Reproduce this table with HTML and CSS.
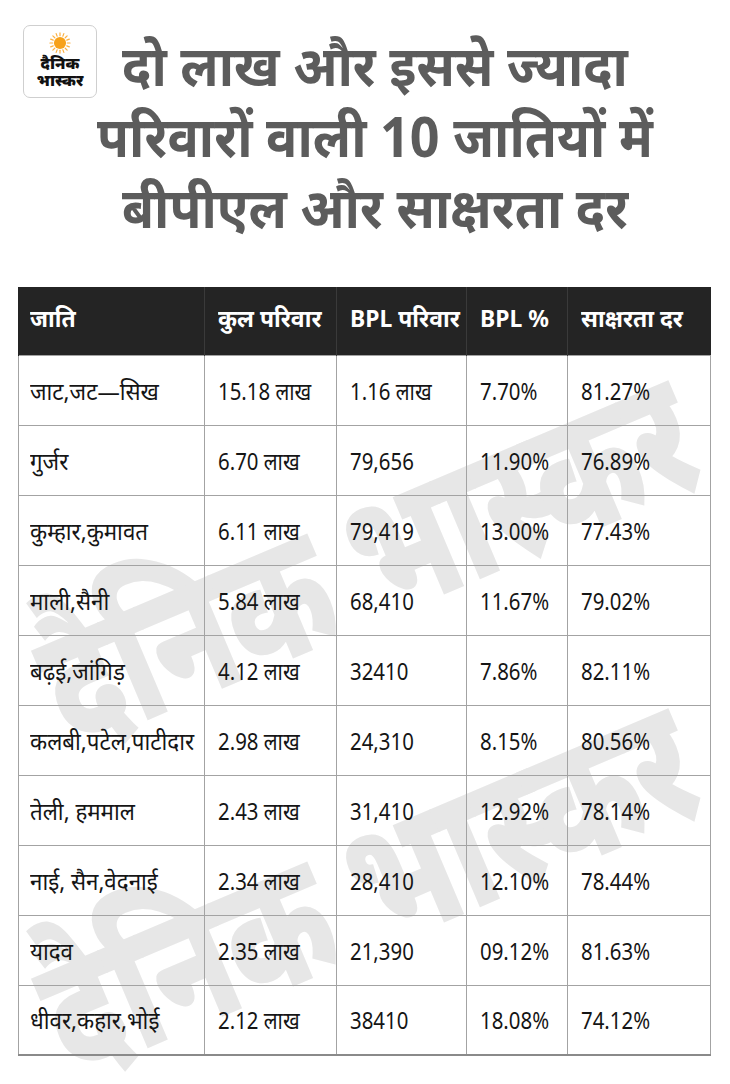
FILE: index.html
```html
<!DOCTYPE html>
<html lang="hi">
<head>
<meta charset="utf-8">
<title>बीपीएल और साक्षरता दर</title>
<link rel="stylesheet" href="styles.css">
</head>
<body>
<div class="page">
  <div class="watermark wm-one">दैनिक भास्कर</div>
  <div class="watermark wm-two">दैनिक भास्कर</div>

  <header class="head">
    <div class="logo">
      <svg class="sun" viewBox="0 0 24 24" width="22" height="22" aria-hidden="true">
        <g stroke="#fbb040" stroke-width="1.3" stroke-linecap="round">
          <line x1="12" y1="1" x2="12" y2="4"/>
          <line x1="12" y1="20" x2="12" y2="23"/>
          <line x1="1" y1="12" x2="4" y2="12"/>
          <line x1="20" y1="12" x2="23" y2="12"/>
          <line x1="4.2" y1="4.2" x2="6.3" y2="6.3"/>
          <line x1="17.7" y1="17.7" x2="19.8" y2="19.8"/>
          <line x1="4.2" y1="19.8" x2="6.3" y2="17.7"/>
          <line x1="17.7" y1="6.3" x2="19.8" y2="4.2"/>
          <line x1="7.8" y1="1.8" x2="8.9" y2="4.6"/>
          <line x1="16.2" y1="1.8" x2="15.1" y2="4.6"/>
          <line x1="7.8" y1="22.2" x2="8.9" y2="19.4"/>
          <line x1="16.2" y1="22.2" x2="15.1" y2="19.4"/>
          <line x1="1.8" y1="7.8" x2="4.6" y2="8.9"/>
          <line x1="1.8" y1="16.2" x2="4.6" y2="15.1"/>
          <line x1="22.2" y1="7.8" x2="19.4" y2="8.9"/>
          <line x1="22.2" y1="16.2" x2="19.4" y2="15.1"/>
        </g>
        <circle cx="12" cy="12" r="6.6" fill="#f7a11a"/>
      </svg>
      <div class="logo-text">दैनिक<br>भास्कर</div>
    </div>
    <h1 class="title">दो लाख और इससे ज्यादा<br>परिवारों वाली 10 जातियों में<br>बीपीएल और साक्षरता दर</h1>
  </header>

  <table class="data">
    <colgroup>
      <col class="c1"><col class="c2"><col class="c3"><col class="c4"><col class="c5">
    </colgroup>
    <thead>
      <tr><th><span class="t">जाति</span></th><th><span class="t">कुल परिवार</span></th><th><span class="t">BPL परिवार</span></th><th><span class="t">BPL %</span></th><th><span class="t">साक्षरता दर</span></th></tr>
    </thead>
    <tbody>
      <tr><td><span class="t">जाट,जट—सिख</span></td><td><span class="t">15.18 लाख</span></td><td><span class="t">1.16 लाख</span></td><td><span class="t">7.70%</span></td><td><span class="t">81.27%</span></td></tr>
      <tr><td><span class="t">गुर्जर</span></td><td><span class="t">6.70 लाख</span></td><td><span class="t">79,656</span></td><td><span class="t">11.90%</span></td><td><span class="t">76.89%</span></td></tr>
      <tr><td><span class="t">कुम्हार,कुमावत</span></td><td><span class="t">6.11 लाख</span></td><td><span class="t">79,419</span></td><td><span class="t">13.00%</span></td><td><span class="t">77.43%</span></td></tr>
      <tr><td><span class="t">माली,सैनी</span></td><td><span class="t">5.84 लाख</span></td><td><span class="t">68,410</span></td><td><span class="t">11.67%</span></td><td><span class="t">79.02%</span></td></tr>
      <tr><td><span class="t">बढ़ई,जांगिड़</span></td><td><span class="t">4.12 लाख</span></td><td><span class="t">32410</span></td><td><span class="t">7.86%</span></td><td><span class="t">82.11%</span></td></tr>
      <tr><td><span class="t">कलबी,पटेल,पाटीदार</span></td><td><span class="t">2.98 लाख</span></td><td><span class="t">24,310</span></td><td><span class="t">8.15%</span></td><td><span class="t">80.56%</span></td></tr>
      <tr><td><span class="t">तेली, हममाल</span></td><td><span class="t">2.43 लाख</span></td><td><span class="t">31,410</span></td><td><span class="t">12.92%</span></td><td><span class="t">78.14%</span></td></tr>
      <tr><td><span class="t">नाई, सैन,वेदनाई</span></td><td><span class="t">2.34 लाख</span></td><td><span class="t">28,410</span></td><td><span class="t">12.10%</span></td><td><span class="t">78.44%</span></td></tr>
      <tr><td><span class="t">यादव</span></td><td><span class="t">2.35 लाख</span></td><td><span class="t">21,390</span></td><td><span class="t">09.12%</span></td><td><span class="t">81.63%</span></td></tr>
      <tr><td><span class="t">धीवर,कहार,भोई</span></td><td><span class="t">2.12 लाख</span></td><td><span class="t">38410</span></td><td><span class="t">18.08%</span></td><td><span class="t">74.12%</span></td></tr>
    </tbody>
  </table>
</div>
</body>
</html>
```

FILE: styles.css
```css
html, body {
  margin: 0;
  padding: 0;
  background: #ffffff;
}

.page {
  position: relative;
  width: 730px;
  height: 1084px;
  overflow: hidden;
  background: #ffffff;
  font-family: "Noto Sans", "Noto Sans Devanagari", "Lohit Devanagari", sans-serif;
}

.head {
  display: grid;
  grid-template-columns: 1fr;
  align-items: start;
  height: 287px;
  padding-top: 25px;
  box-sizing: border-box;
}

.logo {
  grid-area: 1 / 1;
  justify-self: start;
  margin-left: 23px;
  width: 74px;
  height: 73px;
  box-sizing: border-box;
  border: 1px solid #cfcfcf;
  border-radius: 7px;
  display: flex;
  flex-direction: column;
  align-items: center;
  padding-top: 6px;
  background: #fff;
}

.sun {
  display: block;
}

.logo-text {
  margin-top: 1px;
  font-size: 16px;
  line-height: 17px;
  font-weight: 900;
  color: #111;
  text-align: center;
}

.title {
  grid-area: 1 / 1;
  margin: 0;
  padding: 4px 0 0 20px;
  text-align: center;
  font-size: 56px;
  line-height: 71px;
  font-weight: 700;
  color: #5c5c5c;
  white-space: nowrap;
  transform: scaleX(0.93);
  transform-origin: 375px 0;
}

.watermark {
  position: absolute;
  left: 50%;
  white-space: nowrap;
  font-size: 176px;
  font-weight: 900;
  color: #e7e7e7;
  line-height: 1;
  z-index: 0;
}

.wm-one {
  top: 554px;
  transform: translate(-50%, -50%) rotate(-23deg) scaleX(0.7);
}

.wm-two {
  top: 882px;
  transform: translate(-50%, -50%) rotate(-23deg) scaleX(0.7);
}

.data {
  position: relative;
  z-index: 1;
  margin-left: 18px;
  width: 692px;
  border-collapse: collapse;
  table-layout: fixed;
}

.c1 { width: 186px; }
.c2 { width: 132px; }
.c3 { width: 130px; }
.c4 { width: 101px; }
.c5 { width: 143px; }

.t {
  display: inline-block;
  transform-origin: 0 50%;
  transform: scaleX(0.85);
}

.data th {
  height: 68px;
  background: #242424;
  color: #ffffff;
  font-size: 24px;
  font-weight: 700;
  text-align: left;
  padding: 0 0 6px 13px;
  border-left: 1px solid #3a3a3a;
  box-sizing: border-box;
  white-space: nowrap;
}

.data th .t {
  transform: scaleX(0.955);
}

.data th:first-child {
  border-left-color: #242424;
  padding-left: 11px;
}

.data td {
  height: 70px;
  padding: 0 0 0 13px;
  font-size: 24px;
  font-weight: 400;
  color: #151515;
  border: 1px solid #a3a3a3;
  white-space: nowrap;
  box-sizing: border-box;
  overflow: visible;
}

.data td:first-child {
  padding-left: 11px;
}

.data td:first-child .t {
  transform: scaleX(0.93);
}

.data tbody tr:last-child td {
  border-bottom: 2px solid #8a8a8a;
}
```
